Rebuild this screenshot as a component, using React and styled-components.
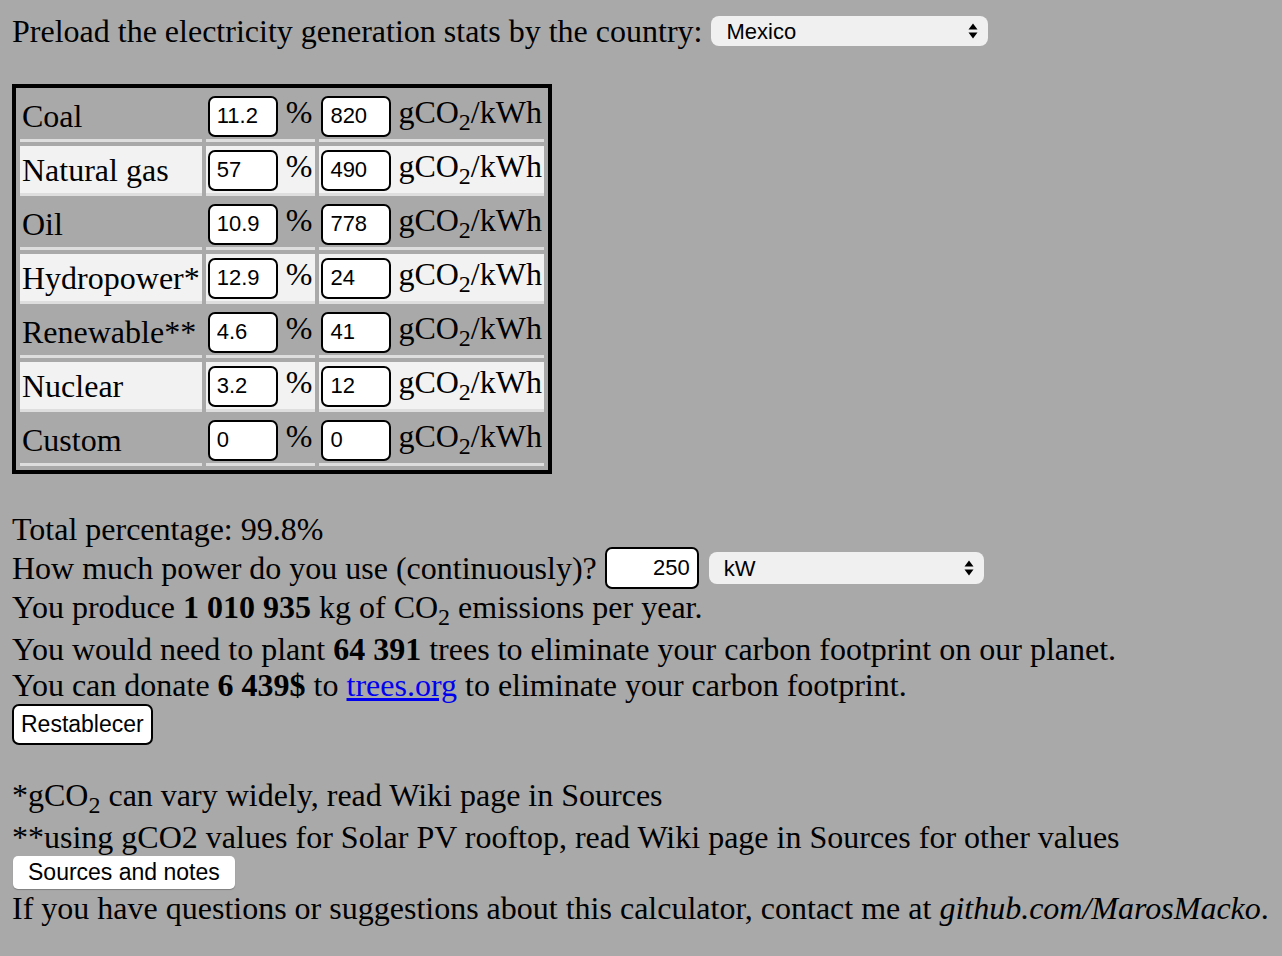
import React from 'react'
import styled, { createGlobalStyle } from 'styled-components'

const Global = createGlobalStyle`
  html, body { margin: 0; padding: 0; background: #a9a9a9; }
  body { font-family: "Liberation Serif", "Times New Roman", serif; color: #000; }
`

const Page = styled.div`
  padding: 12px 12px 0 12px;
  font-size: 32px;
  line-height: 36px;
`

const Header = styled.div`
  display: flex;
  align-items: center;
  height: 38px;
  gap: 9px;
`

const SelectWrap = styled.div`
  position: relative;
  flex: none;
  width: ${p => p.width}px;
  height: ${p => p.height || 30}px;
  margin-left: ${p => p.ml || 0}px;
  font-size: 0;
`

const Select = styled.select`
  display: block;
  appearance: none;
  -webkit-appearance: none;
  width: 100%;
  height: 100%;
  border: none;
  border-radius: 8px;
  background: #f0f0f0;
  font-family: "Liberation Sans", Arial, sans-serif;
  font-size: 22px;
  padding: 0 15px;
  color: #000;
`

const Arrows = styled.svg`
  position: absolute;
  right: 10px;
  top: 50%;
  transform: translateY(-50%);
  pointer-events: none;
`

const Table = styled.table`
  margin-top: 34px;
  border: 4px solid #000;
  border-spacing: 4px;
  line-height: 36px;
`

const Row = styled.tr`
  background: ${p => (p.$alt ? '#f2f2f2' : 'transparent')};
`

const Cell = styled.td`
  height: 47px;
  padding: 0 2px;
  border-bottom: 3px solid #dedede;
  vertical-align: middle;
  white-space: nowrap;
`

const NumInput = styled.input`
  box-sizing: border-box;
  flex: none;
  width: ${p => p.width || 70}px;
  height: ${p => p.height || 41}px;
  border: 2px solid #000;
  border-radius: 7px;
  background: #fff;
  font-family: "Liberation Sans", Arial, sans-serif;
  font-size: 22px;
  padding: 0 7px;
  vertical-align: middle;
  text-align: ${p => p.align || 'left'};
  color: #000;
`

const Pct = styled.span`
  display: inline-block;
  margin: 0 1px 0 8px;
`

const Unit = styled.span`
  margin-left: 7px;
`

const Sub = styled.sub`
  font-size: 0.75em;
  line-height: 0;
  vertical-align: -0.28em;
`

const Results = styled.div`
  margin-top: 37px;
`

const Line = styled.div`
  white-space: nowrap;
  line-height: 36px;
  margin-top: ${p => p.mt || 0}px;
`

const InputLine = styled.div`
  display: flex;
  align-items: center;
  height: 42px;
  white-space: pre;
`

const Link = styled.a`
  color: #0000ee;
  text-decoration: underline;
`

const ResetButton = styled.button`
  display: block;
  margin-top: 1px;
  height: 41px;
  padding: 0 7px;
  background: #fff;
  border: 2px solid #000;
  border-radius: 7px;
  font-family: "Liberation Sans", Arial, sans-serif;
  font-size: 23px;
  color: #000;
`

const Notes = styled.div`
  margin-top: 32px;
`

const SourcesButton = styled.button`
  display: block;
  margin: 1px 0 1px 1px;
  height: 33px;
  padding: 0 15px;
  background: #fff;
  border: none;
  border-radius: 5px;
  box-shadow: 0 1px 1px rgba(0, 0, 0, 0.25);
  font-family: "Liberation Sans", Arial, sans-serif;
  font-size: 23px;
  color: #000;
`

const SelectArrows = () => (
  <Arrows width="10" height="17" viewBox="0 0 10 17">
    <path d="M5 1 L9.5 7 L0.5 7 Z" fill="#000" />
    <path d="M5 16 L9.5 10 L0.5 10 Z" fill="#000" />
  </Arrows>
)

const sources = [
  ['Coal', '11.2', '820'],
  ['Natural gas', '57', '490'],
  ['Oil', '10.9', '778'],
  ['Hydropower*', '12.9', '24'],
  ['Renewable**', '4.6', '41'],
  ['Nuclear', '3.2', '12'],
  ['Custom', '0', '0'],
]

export default function App() {
  return (
    <Page>
      <Global />
      <Header>
        <span>Preload the electricity generation stats by the country:</span>
        <SelectWrap width={277}>
          <Select defaultValue="Mexico">
            <option>Mexico</option>
          </Select>
          <SelectArrows />
        </SelectWrap>
      </Header>

      <Table>
        <tbody>
          {sources.map(([name, pct, g], i) => (
            <Row key={name} $alt={i % 2 === 1}>
              <Cell>{name}</Cell>
              <Cell>
                <NumInput defaultValue={pct} />
                <Pct>%</Pct>
              </Cell>
              <Cell>
                <NumInput defaultValue={g} />
                <Unit>gCO<Sub>2</Sub>/kWh</Unit>
              </Cell>
            </Row>
          ))}
        </tbody>
      </Table>

      <Results>
        <Line>Total percentage: 99.8%</Line>
        <InputLine>
          <span>How much power do you use (continuously)? </span>
          <NumInput width={94} height={42} align="right" defaultValue="250" />
          <SelectWrap width={275} height={32} ml={10}>
            <Select defaultValue="kW">
              <option>kW</option>
            </Select>
            <SelectArrows />
          </SelectWrap>
        </InputLine>
        <Line>
          You produce <b>1 010 935</b> kg of CO<Sub>2</Sub> emissions per year.
        </Line>
        <Line mt={6}>
          You would need to plant <b>64 391</b> trees to eliminate your carbon footprint on our planet.
        </Line>
        <Line>
          You can donate <b>6 439$</b> to <Link href="#">trees.org</Link> to eliminate your carbon footprint.
        </Line>
        <ResetButton>Restablecer</ResetButton>
      </Results>

      <Notes>
        <Line>*gCO<Sub>2</Sub> can vary widely, read Wiki page in Sources</Line>
        <Line mt={6}>**using gCO2 values for Solar PV rooftop, read Wiki page in Sources for other values</Line>
        <SourcesButton>Sources and notes</SourcesButton>
        <Line>
          If you have questions or suggestions about this calculator, contact me at <i>github.com/MarosMacko</i>.
        </Line>
      </Notes>
    </Page>
  )
}
